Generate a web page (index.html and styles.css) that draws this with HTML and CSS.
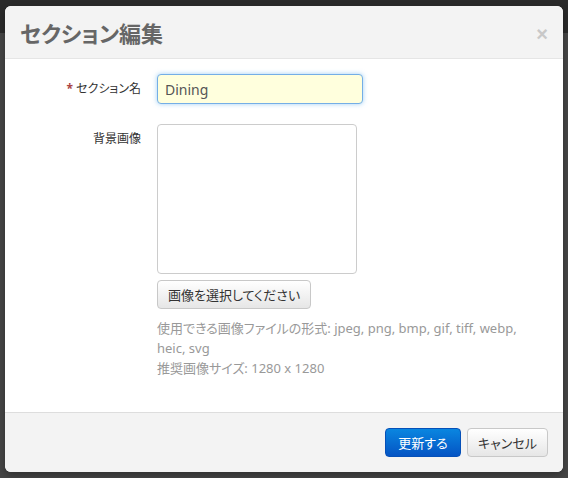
FILE: index.html
```html
<!DOCTYPE html>
<html lang="ja">
<head>
  <meta charset="UTF-8">
  <title>セクション編集</title>
  <link rel="stylesheet" href="styles.css">
</head>
<body>
  <div class="backdrop">
    <div class="modal">
      <div class="modal-header">
        <h3 class="modal-title">セクション編集</h3>
        <button class="close" type="button">&times;</button>
      </div>

      <div class="modal-body">
        <div class="form-row">
          <label class="form-label" for="section-name"><span class="required">*</span> セクション名</label>
          <div class="form-field">
            <input type="text" id="section-name" class="text-input" value="Dining">
          </div>
        </div>

        <div class="form-row">
          <label class="form-label">背景画像</label>
          <div class="form-field">
            <div class="image-box"></div>
            <button class="btn btn-select" type="button">画像を選択してください</button>
            <p class="help-text">使用できる画像ファイルの形式: jpeg, png, bmp, gif, tiff, webp, heic, svg<br>推奨画像サイズ: 1280 x 1280</p>
          </div>
        </div>
      </div>

      <div class="modal-footer">
        <button class="btn btn-primary" type="button">更新する</button>
        <button class="btn btn-cancel" type="button">キャンセル</button>
      </div>
    </div>
  </div>
</body>
</html>
```

FILE: styles.css
```css
* {
  margin: 0;
  padding: 0;
  box-sizing: border-box;
}

body {
  font-family: 'Noto Sans', 'Noto Sans CJK JP', sans-serif;
  font-feature-settings: "palt";
  color: #333;
  background: linear-gradient(#2a2a2a 0 33px, #454545 33px);
  height: 478px;
  overflow: hidden;
}

.backdrop {
  padding: 6px 5px 0 5px;
}

.modal {
  width: 558px;
  height: 466px;
  background: #fff;
  border-radius: 6px;
  overflow: hidden;
  display: flex;
  flex-direction: column;
  box-shadow: 0 3px 7px rgba(0, 0, 0, 0.3);
}

.modal-header {
  flex-shrink: 0;
  display: flex;
  justify-content: space-between;
  align-items: center;
  height: 53px;
  padding: 0 15px 0 15px;
  background: #f3f3f3;
  border-bottom: 1px solid #e5e5e5;
}

.modal-title {
  font-size: 22px;
  font-weight: 700;
  color: #666;
  line-height: 30px;
  margin-top: 2px;
}

.close {
  border: none;
  background: none;
  font-size: 20px;
  font-weight: 700;
  color: #c8c8c8;
  line-height: 20px;
  margin-top: 4px;
  cursor: pointer;
  font-family: 'Liberation Sans', Arial, sans-serif;
}

.modal-body {
  flex: 1;
  min-height: 0;
  overflow: hidden;
  padding: 15px 20px;
}

.form-row {
  display: flex;
  gap: 16px;
  margin-bottom: 20px;
}

.form-label {
  width: 116px;
  text-align: right;
  font-size: 12px;
  line-height: 20px;
  padding-top: 5px;
  color: #333;
}

.required {
  color: #a44;
  font-weight: 700;
}

.form-field {
  flex: 1;
}

.text-input {
  width: 206px;
  height: 30px;
  padding: 4px 7px;
  font-family: inherit;
  font-size: 14px;
  color: #555;
  background: #ffffdd;
  border: 1px solid #74aee6;
  border-radius: 4px;
  box-shadow: 0 0 5px rgba(82, 168, 236, 0.55);
  outline: none;
}

.image-box {
  width: 200px;
  height: 150px;
  border: 1px solid #ccc;
  border-radius: 4px;
}

.btn {
  display: block;
  height: 29px;
  padding: 0 10px;
  white-space: nowrap;
  font-family: inherit;
  font-feature-settings: "palt";
  font-size: 13px;
  color: #333;
  background: linear-gradient(#fff, #e6e6e6);
  border: 1px solid #c8c8c8;
  border-radius: 4px;
  cursor: pointer;
}

.btn-select {
  margin-top: 6px;
  width: 154px;
}

.help-text {
  margin-top: 9px;
  width: 370px;
  font-size: 13px;
  line-height: 20px;
  color: #999;
}

.modal-footer {
  flex-shrink: 0;
  display: flex;
  justify-content: flex-end;
  gap: 6px;
  height: 60px;
  padding: 15px 15px 0 0;
  background: #f3f3f3;
  border-top: 1px solid #ddd;
}

.btn-primary {
  width: 76px;
  color: #fff;
  background: linear-gradient(#0a86e0, #0454c4);
  border-color: #0550b8;
}

.btn-cancel {
  width: 81px;
}
```
